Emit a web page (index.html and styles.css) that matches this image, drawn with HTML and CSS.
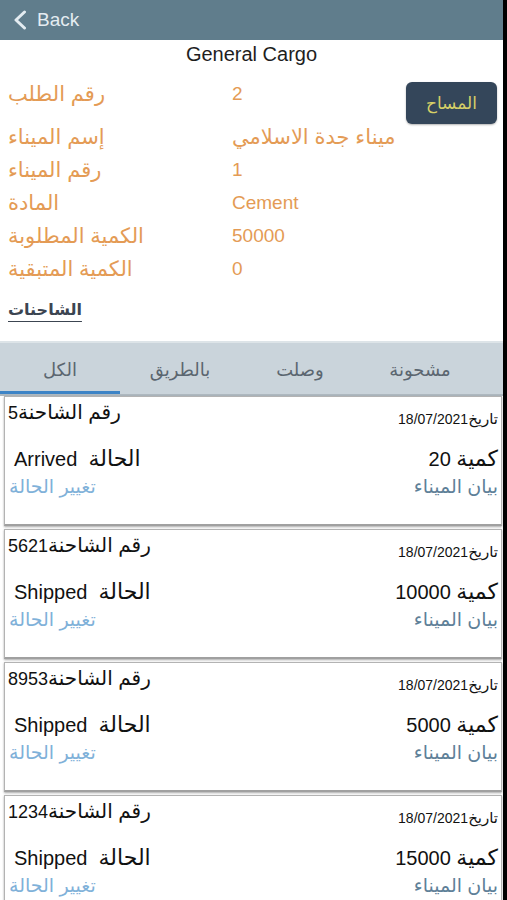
FILE: index.html
```html
<!DOCTYPE html>
<html lang="ar">
<head>
<meta charset="utf-8">
<title>General Cargo</title>
<link rel="stylesheet" href="styles.css">
</head>
<body>
<div class="app">
  <header class="topbar">
    <a class="back">
      <svg class="chev" width="14" height="20" viewBox="0 0 14 20"><path d="M11.5 2 L3 10 L11.5 18" fill="none" stroke="currentColor" stroke-width="3" stroke-linecap="round" stroke-linejoin="round"/></svg>
      <span>Back</span>
    </a>
  </header>

  <h1 class="title">General Cargo</h1>

  <section class="info">
    <div class="fields">
      <div class="row first"><span class="label">رقم الطلب</span><span class="value">2</span></div>
      <div class="row"><span class="label">إسم الميناء</span><span class="value ar">ميناء جدة الاسلامي</span></div>
      <div class="row"><span class="label">رقم الميناء</span><span class="value">1</span></div>
      <div class="row"><span class="label">المادة</span><span class="value">Cement</span></div>
      <div class="row"><span class="label">الكمية المطلوبة</span><span class="value">50000</span></div>
      <div class="row"><span class="label">الكمية المتبقية</span><span class="value">0</span></div>
    </div>
    <button class="survey">المساح</button>
  </section>

  <div class="trucks-link">الشاحنات</div>

  <nav class="tabs">
    <div class="tab active">الكل</div>
    <div class="tab">بالطريق</div>
    <div class="tab">وصلت</div>
    <div class="tab">مشحونة</div>
  </nav>

  <div class="list">
    <div class="card">
      <div class="line top"><span class="truck"><span class="ar">رقم الشاحنة</span>5</span><span class="date"><span class="ar">تاريخ</span>18/07/2021</span></div>
      <div class="line mid"><span class="status">Arrived&nbsp; <span class="ar">الحالة</span></span><span class="qty"><span class="ar">كمية</span> 20</span></div>
      <div class="line bot"><span class="change">تغيير الحالة</span><span class="port">بيان الميناء</span></div>
    </div>
    <div class="card">
      <div class="line top"><span class="truck"><span class="ar">رقم الشاحنة</span>5621</span><span class="date"><span class="ar">تاريخ</span>18/07/2021</span></div>
      <div class="line mid"><span class="status">Shipped&nbsp; <span class="ar">الحالة</span></span><span class="qty"><span class="ar">كمية</span> 10000</span></div>
      <div class="line bot"><span class="change">تغيير الحالة</span><span class="port">بيان الميناء</span></div>
    </div>
    <div class="card">
      <div class="line top"><span class="truck"><span class="ar">رقم الشاحنة</span>8953</span><span class="date"><span class="ar">تاريخ</span>18/07/2021</span></div>
      <div class="line mid"><span class="status">Shipped&nbsp; <span class="ar">الحالة</span></span><span class="qty"><span class="ar">كمية</span> 5000</span></div>
      <div class="line bot"><span class="change">تغيير الحالة</span><span class="port">بيان الميناء</span></div>
    </div>
    <div class="card">
      <div class="line top"><span class="truck"><span class="ar">رقم الشاحنة</span>1234</span><span class="date"><span class="ar">تاريخ</span>18/07/2021</span></div>
      <div class="line mid"><span class="status">Shipped&nbsp; <span class="ar">الحالة</span></span><span class="qty"><span class="ar">كمية</span> 15000</span></div>
      <div class="line bot"><span class="change">تغيير الحالة</span><span class="port">بيان الميناء</span></div>
    </div>
  </div>
</div>
</body>
</html>
```

FILE: styles.css
```css
html, body {
  margin: 0;
  padding: 0;
  background: #000;
}

body {
  font-family: "Liberation Sans", "DejaVu Sans", sans-serif;
  direction: ltr;
}

.app {
  width: 503px;
  height: 900px;
  overflow: hidden;
  background: #fff;
}

.topbar {
  height: 40px;
  background: #607d8c;
  display: flex;
  align-items: center;
  padding-left: 13px;
}

.back {
  display: flex;
  align-items: center;
  gap: 10px;
  color: #e4ecf1;
  font-size: 19px;
}

.chev {
  display: block;
}

.title {
  margin: 0;
  font-size: 20px;
  font-weight: normal;
  line-height: 28px;
  text-align: center;
  color: #1e1e1e;
}

.info {
  display: flex;
  align-items: flex-start;
  margin-top: 9px;
  padding-left: 8px;
  padding-right: 6px;
}

.fields {
  flex: 1;
}

.row {
  display: grid;
  grid-template-columns: 224px 1fr;
  height: 33px;
  line-height: 33px;
  font-size: 19px;
  color: #e49b55;
}

.row .label,
.row .value.ar {
  font-size: 21px;
}

.row.first {
  height: 43px;
}

.survey {
  margin-top: 5px;
  width: 91px;
  height: 42px;
  border: none;
  border-radius: 6px;
  background: #34465a;
  color: #d7d067;
  font-family: "Liberation Sans", "DejaVu Sans", sans-serif;
  font-size: 17px;
  box-shadow: 0 1px 2px rgba(0,0,0,0.3);
}

.trucks-link {
  margin-top: 13px;
  margin-left: 8px;
  line-height: 24px;
  font-size: 16px;
  font-weight: bold;
  color: #3c4551;
  text-decoration: underline;
  text-underline-offset: 6px;
  text-decoration-thickness: 1px;
  width: max-content;
}

.tabs {
  margin-top: 19px;
  display: grid;
  grid-template-columns: repeat(4, 120px);
  background: #cad4db;
  border-top: 2px solid #dde4e8;
  border-bottom: 2px solid #aeb8bf;
}

.tab {
  height: 51px;
  display: flex;
  align-items: center;
  justify-content: center;
  padding-top: 3px;
  box-sizing: border-box;
  font-size: 18px;
  color: #5b6670;
}

.tab.active {
  box-shadow: inset 0 -3px 0 #3d84c6;
}

.list {
  padding-left: 4px;
  padding-right: 1px;
}

.card {
  height: 130px;
  box-sizing: border-box;
  margin-bottom: 3px;
  border: 1px solid #b3b3b3;
  border-bottom: 2px solid #a0a0a0;
  box-shadow: 0 1px 2px rgba(0,0,0,0.35);
  padding: 0 3px 0 3px;
  background: #fff;
  color: #111;
}

.line {
  display: flex;
  justify-content: space-between;
}

.line.top {
  height: 30px;
}

.truck {
  margin-top: 3px;
  height: 24px;
  line-height: 24px;
  font-size: 18px;
}

.truck .ar {
  font-size: 20px;
}

.date {
  align-self: flex-end;
  height: 16px;
  line-height: 16px;
  font-size: 14px;
}

.date .ar {
  font-size: 15px;
}

.line.mid {
  margin-top: 18px;
  height: 28px;
  line-height: 28px;
  font-size: 20px;
}

.line.mid .ar {
  font-size: 22px;
}

.status {
  padding-left: 6px;
}

.line.bot {
  height: 28px;
  line-height: 28px;
  font-size: 19px;
}

.change {
  padding-left: 1px;
  color: #7fb1d9;
}

.port {
  color: #5e7f98;
}
```
